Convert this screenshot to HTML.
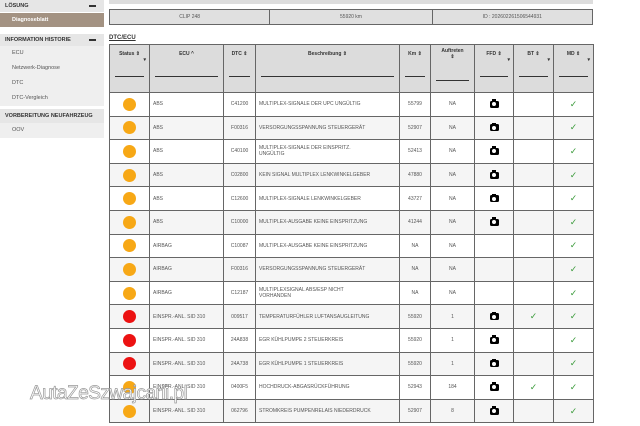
<!DOCTYPE html>
<html><head><meta charset="utf-8"><style>
*{margin:0;padding:0;box-sizing:border-box}
body{width:640px;height:426px;overflow:hidden;background:#fff;font-family:"Liberation Sans",sans-serif;position:relative;color:#444}
.h{background:#e6e6e6;font-weight:bold;font-size:5.5px;color:#333;padding-left:5px;position:absolute;left:0;width:104px;height:12px;line-height:12px}
.h b{position:absolute;right:8px;top:5px;width:7px;height:1.5px;background:#333}
.it{position:absolute;left:0;width:104px;height:15px;line-height:15px;background:#efefef;font-size:5.5px;color:#555;padding-left:12px}
.top{position:absolute;left:109px;top:0;width:484px;height:4px;background:#ddd}
.info{position:absolute;left:109px;top:9px;width:484px;height:16px;border:1px solid #666;background:#e0e0e0;display:flex}
.info div{font-size:5px;color:#555;text-align:center;line-height:14px;border-right:1px solid #666}
.title{position:absolute;left:109px;top:35px;font-size:6px;font-weight:bold;color:#333;text-decoration:underline}
table{position:absolute;left:109px;top:44px;width:484px;border-collapse:collapse;table-layout:fixed}
td,th{border:1px solid #666;font-size:5px;color:#555;height:23.6px;text-align:center;padding:0 3px}
th{background:#dcdcdc;height:48px;vertical-align:top;padding-top:6px;font-weight:bold;color:#333;position:relative}
th i{position:absolute;left:5px;right:5px;top:31px;border-top:1px solid #333}
td.l{text-align:left}
tr:nth-child(odd) td{background:#f5f5f5}
.d{display:inline-block;width:13px;height:13px;border-radius:50%;background:#f7a816;vertical-align:middle}
.r{background:#ec1212}
.ck{color:#3a9a3a;font-size:9px}
.cam{display:inline-block;width:9px;height:7px;background:#000;border-radius:1.5px;position:relative;vertical-align:middle}
.cam:before{content:"";position:absolute;left:2.5px;top:1.5px;width:4px;height:4px;border-radius:50%;background:#fff}
.cam:after{content:"";position:absolute;left:2.5px;top:-1.5px;width:4px;height:2px;background:#000}
.wm{position:absolute;left:30px;top:383px;font-size:19px;color:#fff;-webkit-text-stroke:0.7px #999;letter-spacing:-0.5px}
</style></head><body>
<div class="h" style="top:0">LÖSUNG<b></b></div>
<div class="it" style="top:13px;height:14px;line-height:14px;background:#a39282;color:#fff;font-weight:bold">Diagnoseblatt</div>
<div class="h" style="top:34px">INFORMATION HISTORIE<b></b></div>
<div class="it" style="top:46px">ECU</div>
<div class="it" style="top:61px">Netzwerk-Diagnose</div>
<div class="it" style="top:76px">DTC</div>
<div class="it" style="top:91px">DTC-Vergleich</div>
<div class="h" style="top:109px;height:14px;line-height:14px">VORBEREITUNG NEUFAHRZEUG</div>
<div class="it" style="top:123px">OOV</div>
<div class="top"></div>
<div class="info"><div style="width:161px">CLIP 248</div><div style="width:163px">55920 km</div><div style="width:160px;border:0">ID : 202602261506544931</div></div>
<div class="title">DTC/ECU</div>
<table>
<colgroup><col style="width:40px"><col style="width:74px"><col style="width:32px"><col style="width:144px"><col style="width:31px"><col style="width:44px"><col style="width:39px"><col style="width:40px"><col style="width:40px"></colgroup>
<tr><th>Status ⇕<br><span style="float:right">▾</span><i></i></th><th>ECU ^<i></i></th><th>DTC ⇕<i></i></th><th>Beschreibung ⇕<i></i></th><th>Km ⇕<i></i></th><th style="padding-top:3px">Auftreten<br>⇕<i style="top:35px"></i></th><th>FFD ⇕<br><span style="float:right">▾</span><i></i></th><th>BT ⇕<br><span style="float:right">▾</span><i></i></th><th>MD ⇕<br><span style="float:right">▾</span><i></i></th></tr>
<tr><td><span class="d"></span></td><td class="l">ABS</td><td>C41200</td><td class="l">MULTIPLEX-SIGNALE DER UPC UNGÜLTIG</td><td>55799</td><td>NA</td><td><span class="cam"></span></td><td></td><td class="ck">✓</td></tr>
<tr><td><span class="d"></span></td><td class="l">ABS</td><td>F00316</td><td class="l">VERSORGUNGSSPANNUNG STEUERGERÄT</td><td>52907</td><td>NA</td><td><span class="cam"></span></td><td></td><td class="ck">✓</td></tr>
<tr><td><span class="d"></span></td><td class="l">ABS</td><td>C40100</td><td class="l">MULTIPLEX-SIGNALE DER EINSPRITZ.<br>UNGÜLTIG</td><td>52413</td><td>NA</td><td><span class="cam"></span></td><td></td><td class="ck">✓</td></tr>
<tr><td><span class="d"></span></td><td class="l">ABS</td><td>C02800</td><td class="l">KEIN SIGNAL MULTIPLEX LENKWINKELGEBER</td><td>47880</td><td>NA</td><td><span class="cam"></span></td><td></td><td class="ck">✓</td></tr>
<tr><td><span class="d"></span></td><td class="l">ABS</td><td>C12600</td><td class="l">MULTIPLEX-SIGNALE LENKWINKELGEBER</td><td>43727</td><td>NA</td><td><span class="cam"></span></td><td></td><td class="ck">✓</td></tr>
<tr><td><span class="d"></span></td><td class="l">ABS</td><td>C10000</td><td class="l">MULTIPLEX-AUSGABE KEINE EINSPRITZUNG</td><td>41244</td><td>NA</td><td><span class="cam"></span></td><td></td><td class="ck">✓</td></tr>
<tr><td><span class="d"></span></td><td class="l">AIRBAG</td><td>C10087</td><td class="l">MULTIPLEX-AUSGABE KEINE EINSPRITZUNG</td><td>NA</td><td>NA</td><td></td><td></td><td class="ck">✓</td></tr>
<tr><td><span class="d"></span></td><td class="l">AIRBAG</td><td>F00316</td><td class="l">VERSORGUNGSSPANNUNG STEUERGERÄT</td><td>NA</td><td>NA</td><td></td><td></td><td class="ck">✓</td></tr>
<tr><td><span class="d"></span></td><td class="l">AIRBAG</td><td>C12187</td><td class="l">MULTIPLEXSIGNAL ABS/ESP NICHT<br>VORHANDEN</td><td>NA</td><td>NA</td><td></td><td></td><td class="ck">✓</td></tr>
<tr><td><span class="d r"></span></td><td class="l">EINSPR.-ANL. SID 310</td><td>009517</td><td class="l">TEMPERATURFÜHLER LUFTANSAUGLEITUNG</td><td>55920</td><td>1</td><td><span class="cam"></span></td><td class="ck">✓</td><td class="ck">✓</td></tr>
<tr><td><span class="d r"></span></td><td class="l">EINSPR.-ANL. SID 310</td><td>24A838</td><td class="l">EGR KÜHLPUMPE 2 STEUERKREIS</td><td>55920</td><td>1</td><td><span class="cam"></span></td><td></td><td class="ck">✓</td></tr>
<tr><td><span class="d r"></span></td><td class="l">EINSPR.-ANL. SID 310</td><td>24A738</td><td class="l">EGR KÜHLPUMPE 1 STEUERKREIS</td><td>55920</td><td>1</td><td><span class="cam"></span></td><td></td><td class="ck">✓</td></tr>
<tr><td><span class="d"></span></td><td class="l">EINSPR.-ANL. SID 310</td><td>0400F5</td><td class="l">HOCHDRUCK-ABGASRÜCKFÜHRUNG</td><td>52943</td><td>184</td><td><span class="cam"></span></td><td class="ck">✓</td><td class="ck">✓</td></tr>
<tr><td><span class="d"></span></td><td class="l">EINSPR.-ANL. SID 310</td><td>062796</td><td class="l">STROMKREIS PUMPENRELAIS NIEDERDRUCK</td><td>52907</td><td>8</td><td><span class="cam"></span></td><td></td><td class="ck">✓</td></tr>
</table>
<div class="wm">AutaZeSzwajcarii.pl</div>
</body></html>
